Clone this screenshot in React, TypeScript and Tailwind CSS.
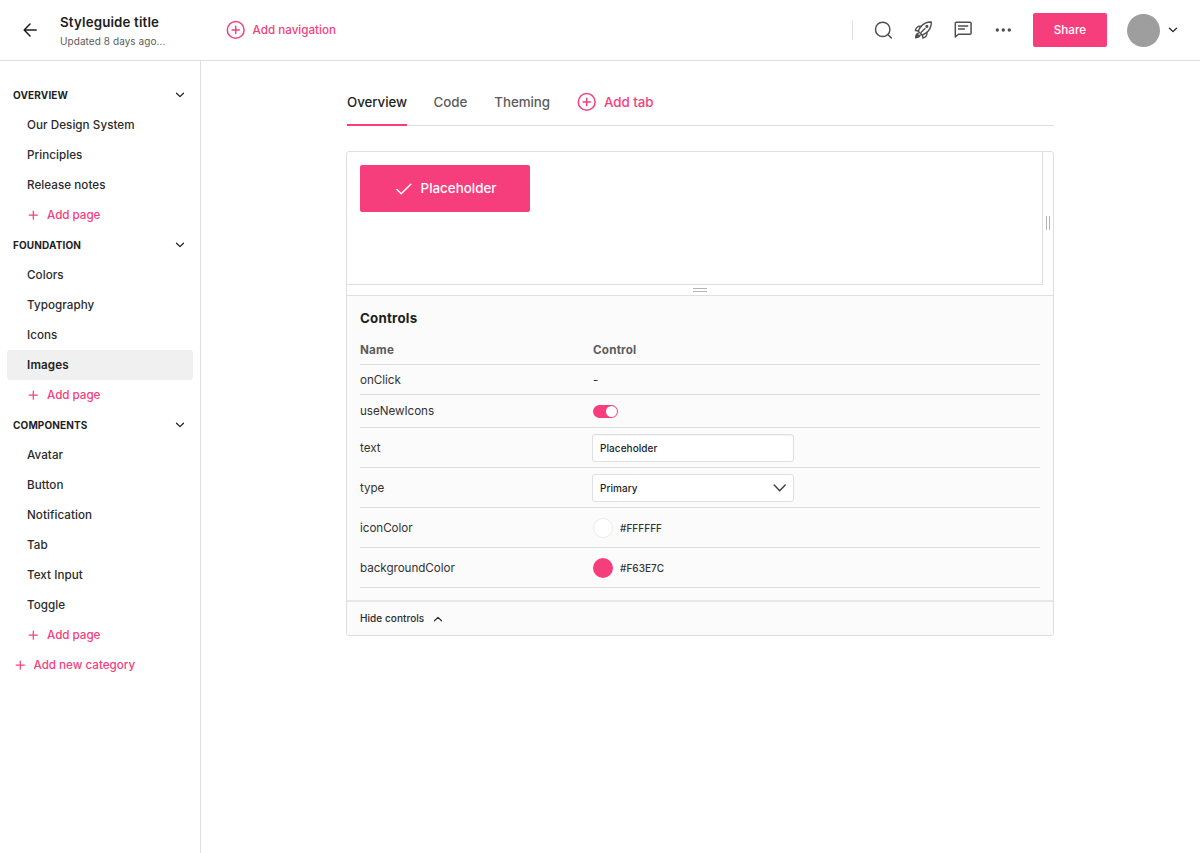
import React from "react";

type IconProps = { className?: string; d: string; width: number; height: number; viewBox: string; stroke?: number };

function Icon({ className = "", d, width, height, viewBox, stroke = 1.5 }: IconProps) {
  return (
    <svg
      className={`block shrink-0 ${className}`}
      width={width}
      height={height}
      viewBox={viewBox}
      fill="none"
      stroke="currentColor"
      strokeWidth={stroke}
      strokeLinecap="round"
      strokeLinejoin="round"
    >
      <path d={d} />
    </svg>
  );
}

const Chevron = () => (
  <Icon d="M1.5 1.2L5 4.6L8.5 1.2" width={10} height={6} viewBox="0 0 10 6" stroke={1.2} />
);

const Plus = () => <Icon d="M5.3 1V9.2M1.2 5.1H9.4" width={10} height={10} viewBox="0 0 10 10" stroke={1.2} />;

const CirclePlus = () => (
  <svg className="block shrink-0" width="20" height="20" viewBox="0 0 20 20" fill="none" stroke="currentColor" strokeWidth="1.5" strokeLinecap="round">
    <circle cx="9.7" cy="9.9" r="8.4" />
    <path d="M9.7 6.3V13.5M6.1 9.9H13.3" />
  </svg>
);

const sections = [
  { title: "OVERVIEW", pages: ["Our Design System", "Principles", "Release notes"] },
  { title: "FOUNDATION", pages: ["Colors", "Typography", "Icons", "Images"] },
  { title: "COMPONENTS", pages: ["Avatar", "Button", "Notification", "Tab", "Text Input", "Toggle"] },
];

function Header() {
  return (
    <header className="flex h-[61px] shrink-0 items-center border-b border-[#dfdfdf] text-[#1e1e1e]">
      <div className="flex h-[60px] w-[226px] items-center pl-[23px]">
        <Icon d="M13.2 7H1.2M7 1L1.2 7L7 13" width={14} height={14} viewBox="0 0 14 14" stroke={1.5} />
        <div className="ml-[23px] flex flex-col pt-0.5">
          <span className="text-[13.33px] leading-[20px] font-semibold tracking-[0.15px]">Styleguide title</span>
          <span className="text-[10px] leading-[18px] tracking-[0.07px] text-[#5c5c5c]">Updated 8 days ago...</span>
        </div>
      </div>
      <button className="flex items-center gap-[6.5px] text-[11.67px] font-medium text-[#f63e7c]">
        <CirclePlus />
        <span className="pt-px">Add navigation</span>
      </button>
      <div className="ml-auto flex items-center text-[#4f4f4f]">
        <div className="mr-5 h-5 w-px bg-[#e2e2e2]" />
        <div className="flex items-center gap-5">
          <svg width="20" height="20" viewBox="0 0 20 20" fill="none" stroke="currentColor" strokeWidth="1.5" strokeLinecap="round">
            <circle cx="9.7" cy="9.4" r="7.2" />
            <path d="M15 14.7L18.3 17.9" />
          </svg>
          <svg width="20" height="20" viewBox="0 0 20 20" fill="none" stroke="currentColor" strokeWidth="1.4" strokeLinecap="round" strokeLinejoin="round">
            <path d="M18.3 2C13.9 1.8 10.7 3.3 7.9 6.5C6.7 8 5.9 9.5 5.3 11.2L9.1 15C10.8 14.4 12.3 13.6 13.8 12.4C17 9.6 18.5 6.4 18.3 2Z" />
            <path d="M7.9 6.5C5.4 5.7 3.2 7.2 2.3 10.5C3.4 10.3 4.4 10.5 5.3 11.2M13.8 12.4C14.6 14.9 13.1 17.1 9.8 18C10 16.9 9.8 15.9 9.1 15" />
            <path d="M8.2 12.2L12 8.4M5.3 13.2C3.6 13.6 2.9 15.2 2.6 17.7C5.1 17.4 6.7 16.7 7.1 15M2.6 17.7L5.3 15" />
            <circle cx="13.9" cy="6.3" r="0.9" fill="currentColor" />
          </svg>
          <svg width="20" height="20" viewBox="0 0 20 20" fill="none" stroke="currentColor" strokeWidth="1.5" strokeLinecap="round" strokeLinejoin="round">
            <path d="M2.3 16.9V3.3Q2.3 2.3 3.3 2.3H17.1Q18.1 2.3 18.1 3.3V13.2Q18.1 14.2 17.1 14.2H5.5L2.3 16.9Z" />
            <path d="M5.6 6.1H14.7M5.6 9.1H11.4" />
          </svg>
          <svg width="20" height="20" viewBox="0 0 20 20" fill="currentColor">
            <circle cx="4.3" cy="10" r="1.7" />
            <circle cx="10.3" cy="10" r="1.7" />
            <circle cx="16.3" cy="10" r="1.7" />
          </svg>
        </div>
        <button className="ml-5 h-[34px] w-[74px] rounded-[2px] bg-[#f63e7c] pt-px text-[11.67px] font-medium tracking-[0.04px] text-white">Share</button>
        <div className="ml-5 size-[33px] rounded-full bg-[#9e9e9e]" />
        <div className="mr-[22px] ml-2 text-[#1e1e1e]">
          <Chevron />
        </div>
      </div>
    </header>
  );
}

function Sidebar() {
  return (
    <nav className="flex w-[201px] shrink-0 flex-col border-r border-[#dfdfdf] px-[7px] pt-[19px] text-[11.67px] font-medium tracking-[0.04px] text-[#2b2b2b]">
      {sections.map((s) => (
        <div key={s.title} className="flex flex-col">
          <div className="flex h-[30px] items-center justify-between pr-2 pl-1.5 text-[10px] font-bold tracking-[0.14px] text-[#1e1e1e]">
            <span>{s.title}</span>
            <Chevron />
          </div>
          {s.pages.map((p) => (
            <a
              key={p}
              className={`flex h-[30px] items-center rounded-[3px] pt-px pl-5 ${p === "Images" ? "bg-[#f0f0f0] font-semibold tracking-[0.15px] text-[#1e1e1e]" : ""}`}
            >
              {p}
            </a>
          ))}
          <a className="flex h-[30px] items-center gap-[9px] pl-[21px] tracking-[-0.04px] text-[#f63e7c]">
            <Plus />
            <span className="pt-px">Add page</span>
          </a>
        </div>
      ))}
      <a className="flex h-[30px] items-center gap-[9px] pl-[7.5px] tracking-[-0.02px] text-[#f63e7c]">
        <Plus />
        <span className="pt-px">Add new category</span>
      </a>
    </nav>
  );
}

function Tabs() {
  return (
    <div className="ml-px flex h-[47px] items-stretch border-b border-[#dfdfdf] text-[13.33px] leading-5 font-medium tracking-[-0.05px] text-[#5c5c5c]">
      <span className="-mb-px h-[47px] border-b-2 border-[#f63e7c] pt-[13px] text-[#1e1e1e]">Overview</span>
      <span className="ml-[26.5px] pt-[13px]">Code</span>
      <span className="ml-[27px] pt-[13px]">Theming</span>
      <span className="mt-[13px] ml-[27px] flex h-5 items-center gap-[7px] text-[#f63e7c]">
        <CirclePlus />
        Add tab
      </span>
    </div>
  );
}

function Row({ name, height, children }: { name: string; height: string; children: React.ReactNode }) {
  return (
    <div className={`flex items-center border-b border-[#dcdcdc] ${height}`}>
      <span className="w-[233px] pt-0.5">{name}</span>
      {children}
    </div>
  );
}

function Controls() {
  return (
    <section className="border-t border-[#dfdfdf] bg-[#fbfbfb] pr-[13px] pl-[13px] text-[11.67px] tracking-[-0.05px] text-[#333333]">
      <h2 className="pt-[11px] text-[13.33px] leading-[22px] font-bold tracking-[0.22px] text-[#1e1e1e]">Controls</h2>
      <div className="mt-1.5 flex h-[30px] items-center border-b border-[#dcdcdc] pt-0.5 font-bold tracking-[0.2px] text-[#5c5c5c]">
        <span className="w-[233px]">Name</span>
        <span>Control</span>
      </div>
      <Row name="onClick" height="h-[30px]">
        <span className="pt-0.5">-</span>
      </Row>
      <Row name="useNewIcons" height="h-[33px]">
        <span className="flex h-[13px] w-[25px] items-center justify-end rounded-full bg-[#f63e7c] pr-px">
          <span className="size-[11px] rounded-full bg-white" />
        </span>
      </Row>
      <Row name="text" height="h-[40px]">
        <span className="-ml-px flex h-7 w-[202px] items-center rounded-[3px] border border-[#dfdfdf] bg-white pt-px pl-[7px] text-[10px] font-medium tracking-[0.06px] text-[#1e1e1e] shadow-[inset_0_1px_1px_#0000000d]">
          Placeholder
        </span>
      </Row>
      <Row name="type" height="h-[40px]">
        <span className="-ml-px flex h-7 w-[202px] items-center justify-between rounded-[3px] border border-[#dfdfdf] bg-white pr-[7px] pl-[7px] text-[10px] font-medium tracking-[0.06px] text-[#1e1e1e]">
          <span className="pt-px">Primary</span>
          <Icon className="text-[#444444]" d="M1.2 1L6.7 6.7L12.2 1" width={13} height={8} viewBox="0 0 13 8" stroke={1.5} />
        </span>
      </Row>
      <Row name="iconColor" height="h-[40px]">
        <span className="size-5 rounded-full border border-[#ebebeb] bg-white" />
        <span className="ml-[7px] pt-px text-[10px] font-medium tracking-[0.04px]">#FFFFFF</span>
      </Row>
      <Row name="backgroundColor" height="h-[40px]">
        <span className="size-5 rounded-full bg-[#f63e7c]" />
        <span className="ml-[7px] pt-px text-[10px] font-medium tracking-[0.04px]">#F63E7C</span>
      </Row>
      <div className="-mx-[13px] mt-3 flex h-[35px] items-center gap-[9px] border-t-2 border-[#e8e8e8] pl-[13px] text-[10px] font-medium tracking-[0.06px] text-[#2b2b2b]">
        <span>Hide controls</span>
        <span className="rotate-180">
          <Chevron />
        </span>
      </div>
    </section>
  );
}

export default function App() {
  return (
    <div className="flex h-[853px] w-[1200px] flex-col overflow-hidden bg-white font-['Inter',sans-serif]">
      <Header />
      <div className="flex min-h-0 flex-1">
        <Sidebar />
        <main className="ml-[145px] flex w-[708px] flex-col pt-[18px]">
          <Tabs />
          <div className="mt-[25px] overflow-hidden rounded-[3px] border border-[#dfdfdf]">
            <div className="flex h-[133px]">
              <div className="w-[696px] border-r border-b border-[#dfdfdf] pt-[13px] pl-[13px]">
                <button className="flex h-[47px] w-[170px] items-center justify-center gap-[9px] rounded-[2px] bg-[#f63e7c] pl-[2px] text-[13.33px] font-medium tracking-[0.02px] text-white">
                  <Icon d="M1 6.5L5.2 10.7L14.8 1.3" width={16} height={12} viewBox="0 0 16 12" stroke={1.5} />
                  <span>Placeholder</span>
                </button>
              </div>
              <div className="flex flex-1 items-center justify-center pt-[9px]">
                <div className="h-[14px] w-1 border-x border-[#b4b4b4]" />
              </div>
            </div>
            <div className="flex h-[10px] items-center justify-center">
              <div className="h-1 w-[14px] border-y border-[#b4b4b4]" />
            </div>
            <Controls />
          </div>
        </main>
      </div>
    </div>
  );
}
